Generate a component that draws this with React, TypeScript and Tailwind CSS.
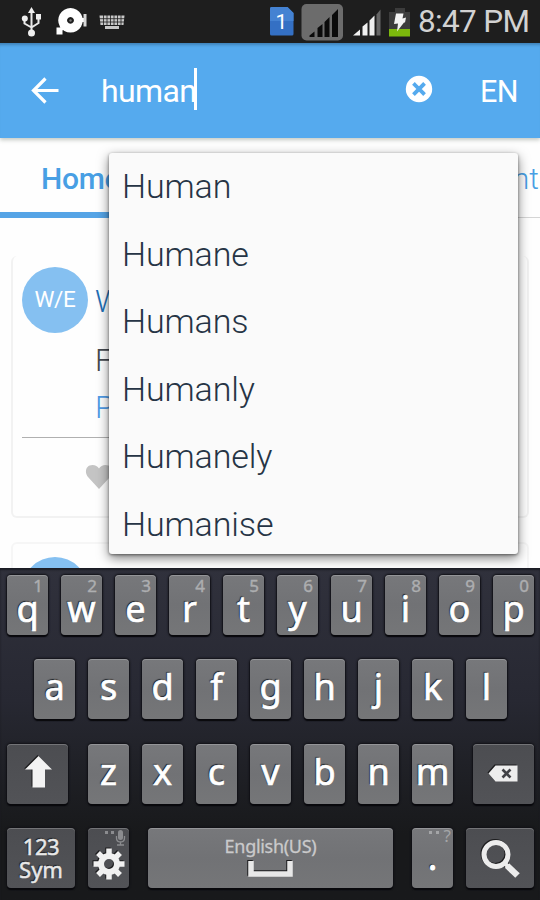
import React from "react";

const suggestions = ["Human", "Humane", "Humans", "Humanly", "Humanely", "Humanise"];

const base =
  "relative h-[60px] shrink-0 rounded-[4px] shadow-[0_2px_1px_#08080c,0_0_2px_1px_#111116,inset_0_1px_0_rgba(255,255,255,0.22)]";
const light = "bg-linear-to-b from-[#77787b] via-[#717275] to-[#757678]";
const dark = "bg-linear-to-b from-[#4c4d51] to-[#525357]";
const glyphShadow = "[text-shadow:-1px_-1px_1px_#1c1c1e]";
const iconShadow = "drop-shadow-[-1px_-1px_0px_#1c1c1e]";

function LetterKey({ letter, hint }: { letter: string; hint?: string }) {
  return (
    <div className={`${base} ${light} w-[41px]`}>
      {hint && (
        <span className="absolute right-[5px] top-[1px] text-[17px] leading-[20px] text-[#adaeb0] [-webkit-text-stroke:0.4px_#adaeb0]">
          {hint}
        </span>
      )}
      <span
        className={`block pt-[9px] text-center text-[36px] text-white [-webkit-text-stroke:0.7px_#fff] ${glyphShadow} ${
          hint ? "leading-[50px]" : "leading-[37px]"
        }`}
      >
        {letter}
      </span>
    </div>
  );
}

function StatusBar() {
  return (
    <div className="flex h-[43px] shrink-0 items-center bg-[#1e1e1e]">
      <svg width="270" height="43" viewBox="0 0 270 43" fill="none">
        <g stroke="#e9e9e9" strokeWidth="2">
          <path d="M31.5 12v22M24.500 18v5.500l7 4M38.500 17v6l-7 4.500" />
        </g>
        <g fill="#efefef">
          <path d="M31.500 7l3.500 6h-7z" />
          <circle cx="24.800" cy="18.500" r="3" />
          <path d="M36 14h5v5.500h-5z" />
          <circle cx="31.500" cy="33" r="3.500" />
        </g>
        <path
          fillRule="evenodd"
          fill="#fff"
          d="M70.500 8a12.300 12.300 0 1 0 .01 0zM70.500 17a3.400 3.400 0 1 1-.01 0z"
        />
        <path fill="#fff" d="M56.500 27.500h6v7h-6zM60 25l4 4-3 3zM79 18h5v4h-5z" />
        <path fill="#d8d8d8" d="M83.500 14h3v12.500h-3z" />
        <circle cx="70.500" cy="20.500" r="1.200" fill="#777" />
        <g fill="#c9c9c9">
          <path d="M99.500 15.500h25l-1 9.500h-23zM105 26h14v3h-14z" />
        </g>
        <path stroke="#1e1e1e" strokeWidth="0.800" d="M99 18.700h26M99 22h26M103.500 15v10M107 15v10M110.500 15v10M114 15v10M117.500 15v10M121 15v10M105 25.500h14" />
      </svg>
      <svg width="145" height="43" viewBox="270 0 145 43">
        <path d="M270 8.500q0-1.500 1.500-1.500H287.500l6 6v21q0 1.500-1.500 1.500h-20.500q-1.500 0-1.500-1.500z" fill="#3470c4" />
        <path d="M270 8.500q0-1.500 1.500-1.500H287.500l6 6v8H270z" fill="#4482d2" />
        <text x="281.500" y="28.500" textAnchor="middle" fill="#fff" fontSize="21" fontFamily="Roboto, sans-serif">1</text>
        <rect x="301.500" y="4" width="41.500" height="36.500" rx="5" fill="#6c6c6c" />
        <path fill="#0b0b0b" d="M309.500 37v-1.500l5-4v5.500zM317.500 37v-9l5-4v13zM324.500 37v-15l5-5v20zM332 37v-22l6-6v28z" />
        <path fill="#f0f0f0" d="M353 35.500l7-6v6zM362.500 35.500v-9l5-4v13zM369.500 35.500v-15l5-5v20z" />
        <path fill="#666" d="M376.500 35.500v-21l4-5v26z" />
        <path fill="#3c3c3c" d="M395 8h10v4h5v24h-21V12h6z" />
        <path fill="#7cb80c" d="M389 29h21v7.500h-21z" />
        <path fill="#f4f4f4" d="M396 13.500h7.500l-1 5 3.500-1-1 5h-1l-7 9 1-8-4 .500z" />
      </svg>
      <span className="whitespace-nowrap pl-[3px] text-[31.500px] tracking-[-0.650px] text-[#d2d2d2]">8:47 PM</span>
    </div>
  );
}

function SearchBar() {
  return (
    <div className="z-10 flex h-[95px] shrink-0 items-center bg-[#55aaee] text-white shadow-[inset_0_4px_3px_-2px_#3f82b8,0_2px_4px_rgba(60,80,60,0.3)]">
      <svg className="ml-[30px] mt-[-1px] shrink-0" width="30" height="30" viewBox="0 0 30 30" fill="none" stroke="#fff" strokeWidth="3.200">
        <path d="M28.500 15.500H3.500M15.500 3.500L3.500 15.500l12 12" />
      </svg>
      <div className="ml-[41px] flex w-[96px] shrink-0 items-center">
        <span className="w-[93px] text-[32px] tracking-[-0.600px]">human</span>
        <i className="mt-[-3px] h-[42px] w-[3px] shrink-0 bg-white" />
      </div>
      <svg className="ml-[208px] mt-[-3px] shrink-0" width="28" height="28" viewBox="0 0 28 28">
        <circle cx="14" cy="14" r="13.200" fill="#fff" />
        <path d="M9.800 9.800l8.400 8.400M18.200 9.800l-8.400 8.400" stroke="#55aaee" strokeWidth="3.800" strokeLinecap="square" />
      </svg>
      <span className="ml-[47px] pt-[2px] text-[30.500px] tracking-[-0.700px]">EN</span>
    </div>
  );
}

function Feed() {
  return (
    <div className="flex h-full flex-col bg-[#fefefe]">
      <div className="flex h-[80px] shrink-0 items-start justify-between border-b border-[#d5d5d5] text-[30px] text-[#489fe4]">
        <div className="flex h-[80px] w-[190px] items-start border-b-[6px] border-[#55a4e6] pl-[41px] pt-[18px] font-medium tracking-[-0.300px]">
          Home
        </div>
        <span className="pr-[1px] pt-[18px] font-light">Recent</span>
      </div>
      <div className="ml-[11px] mt-[38px] flex h-[262px] w-[518px] shrink-0 flex-col rounded-[6px] border-x-2 border-b-2 border-[#f2f2f2] px-[9px]">
        <div className="flex h-[182px] shrink-0 border-b border-[#b0b0b0]">
          <div className="mt-[11px] flex h-[66px] w-[66px] items-center justify-center rounded-full bg-[#85c0f1] text-[22.500px] tracking-[-0.300px] text-white">
            W/E
          </div>
          <div className="pl-[7px] pt-[23px] text-[31px] font-light leading-[46px] text-[#44484f]">
            <div className="text-[#1f6fb5]">W</div>
            <div className="mt-[13px]">F</div>
            <div className="mt-[1px] text-[#4f9be6]">P</div>
          </div>
        </div>
        <svg className="ml-[63px] mt-[26px]" width="28" height="26" viewBox="0 0 28 26">
          <path d="M14 25L3 13C-1 8 1 1 7.500 1c3 0 5 1.500 6.500 3.500C15.500 2.500 17.500 1 20.500 1 27 1 29 8 25 13z" fill="#c4c4c4" />
        </svg>
      </div>
      <div className="ml-[11px] mt-[24px] w-[518px] rounded-[6px] border-2 border-[#f6f6f6] px-[9px] pt-[13px]">
        <div className="h-[66px] w-[66px] rounded-full bg-[#85c0f1]" />
      </div>
    </div>
  );
}

function Keyboard() {
  return (
    <div className="flex h-[332px] shrink-0 flex-col gap-[24.300px] bg-linear-to-b from-[#30313c] via-[#272832] via-40% to-[#18191b] to-80% pl-[7px] pr-[6px] pt-[7px] font-['Noto_Sans',sans-serif] shadow-[inset_0_2px_2px_#1b1c24]">
      <div className="flex gap-[13px]">
        {"qwertyuiop".split("").map((l, i) => (
          <LetterKey key={l} letter={l} hint={String((i + 1) % 10)} />
        ))}
      </div>
      <div className="flex gap-[13px] pl-[27px]">
        {"asdfghjkl".split("").map((l) => (
          <LetterKey key={l} letter={l} />
        ))}
      </div>
      <div className="flex justify-between">
        <div className={`${base} ${dark} w-[61px]`}>
          <svg className={iconShadow} width="61" height="60" viewBox="0 0 61 60">
            <path d="M31.500 12L45 25.500H38V43.500H25.500V25.500H18z" fill="#f3f3f3" />
          </svg>
        </div>
        <div className="flex gap-[13px]">
          {"zxcvbnm".split("").map((l) => (
            <LetterKey key={l} letter={l} />
          ))}
        </div>
        <div className={`${base} ${dark} w-[61px]`}>
          <svg className={iconShadow} width="61" height="60" viewBox="0 0 61 60">
            <path d="M15.500 29.500L22.500 21.500H44.500V37.500H22.500z" fill="#ededed" />
            <path d="M29.500 25.500l8 8M37.500 25.500l-8 8" stroke="#414246" strokeWidth="2.600" />
          </svg>
        </div>
      </div>
      <div className="flex">
        <div className={`${base} ${dark} w-[68px] pt-[7px] text-center text-[22px] leading-[23px] text-[#e8e8e8] [-webkit-text-stroke:0.5px_#e8e8e8] ${glyphShadow}`}>
          <div className="tracking-[-0.500px]">123</div>
          <div>Sym</div>
        </div>
        <div className={`${base} ${dark} ml-[13px] w-[41px]`}>
          <svg width="41" height="60" viewBox="0 0 41 60">
            <path d="M17 3h3v3h-3zM23 3h3v3h-3z" fill="#8b8c8f" />
            <rect x="30" y="2" width="5" height="10" rx="2.500" fill="#8b8c8f" />
            <path d="M28.500 8v2q0 4 4 4t4-4V8M32.500 14v3M29 17h7" stroke="#8b8c8f" strokeWidth="1.300" fill="none" />
            <g className={iconShadow} transform="translate(21 36)">
              <g stroke="#f1f1f1" strokeWidth="5.500">
                <path d="M0-15.500V-8M0 15.500V8M-15.500 0H-8M15.500 0H8M-11-11L-6-6M11 11L6 6M11-11L6-6M-11 11L-6 6" />
              </g>
              <circle r="8" fill="none" stroke="#f1f1f1" strokeWidth="6" />
            </g>
          </svg>
        </div>
        <div className={`${base} ${light} ml-[19px] w-[245px] pt-[7px] text-center text-[18px] leading-[23px] tracking-[-0.300px] text-[#cacacb] [-webkit-text-stroke:0.3px_#cacacb]`}>
          English(US)
          <svg className={`absolute left-[99px] top-[32px] ${iconShadow}`} width="48" height="18" viewBox="0 0 48 18">
            <path d="M4 1V14H43V1" fill="none" stroke="#e8e8e8" strokeWidth="5.500" />
          </svg>
        </div>
        <div className={`${base} ${light} ml-[19px] w-[41px]`}>
          <svg className="absolute left-[16px] top-[2px]" width="14" height="5" viewBox="0 0 14 5">
            <path d="M1 1h3v3H1zM8 1h3v3H8z" fill="#a4a5a7" />
          </svg>
          <span className="absolute right-[2px] top-[-2px] text-[17px] leading-[20px] text-[#a4a5a7]">?</span>
          <span className={`block pt-[9px] text-center text-[34px] leading-[40px] text-white [-webkit-text-stroke:1px_#fff] ${glyphShadow}`}>.</span>
        </div>
        <div className={`${base} ${dark} ml-[13px] w-[68px]`}>
          <svg className={iconShadow} width="68" height="60" viewBox="0 0 68 60">
            <circle cx="30" cy="26.500" r="12" fill="none" stroke="#ececec" strokeWidth="5" />
            <path d="M38.500 35l4 4" stroke="#ececec" strokeWidth="4" />
            <path d="M41 37.500l10.500 10" stroke="#ececec" strokeWidth="6.500" />
          </svg>
        </div>
      </div>
    </div>
  );
}

export default function App() {
  return (
    <div className="flex h-[900px] w-[540px] flex-col overflow-hidden bg-white font-[Roboto,sans-serif]">
      <StatusBar />
      <SearchBar />
      <div className="relative h-[430px] shrink-0 overflow-hidden">
        <Feed />
        <div className="absolute left-[109px] top-[15px] h-[401px] w-[409px] overflow-visible rounded-[3px] bg-[#fafafa] pl-[13px] shadow-[0_4px_12px_rgba(0,0,0,0.5),0_1px_3px_rgba(0,0,0,0.45)]">
          {suggestions.map((s) => (
            <div key={s} className="flex h-[67.500px] items-center text-[34px] font-light tracking-[-0.100px] text-[#263445]">
              {s}
            </div>
          ))}
        </div>
      </div>
      <Keyboard />
    </div>
  );
}
